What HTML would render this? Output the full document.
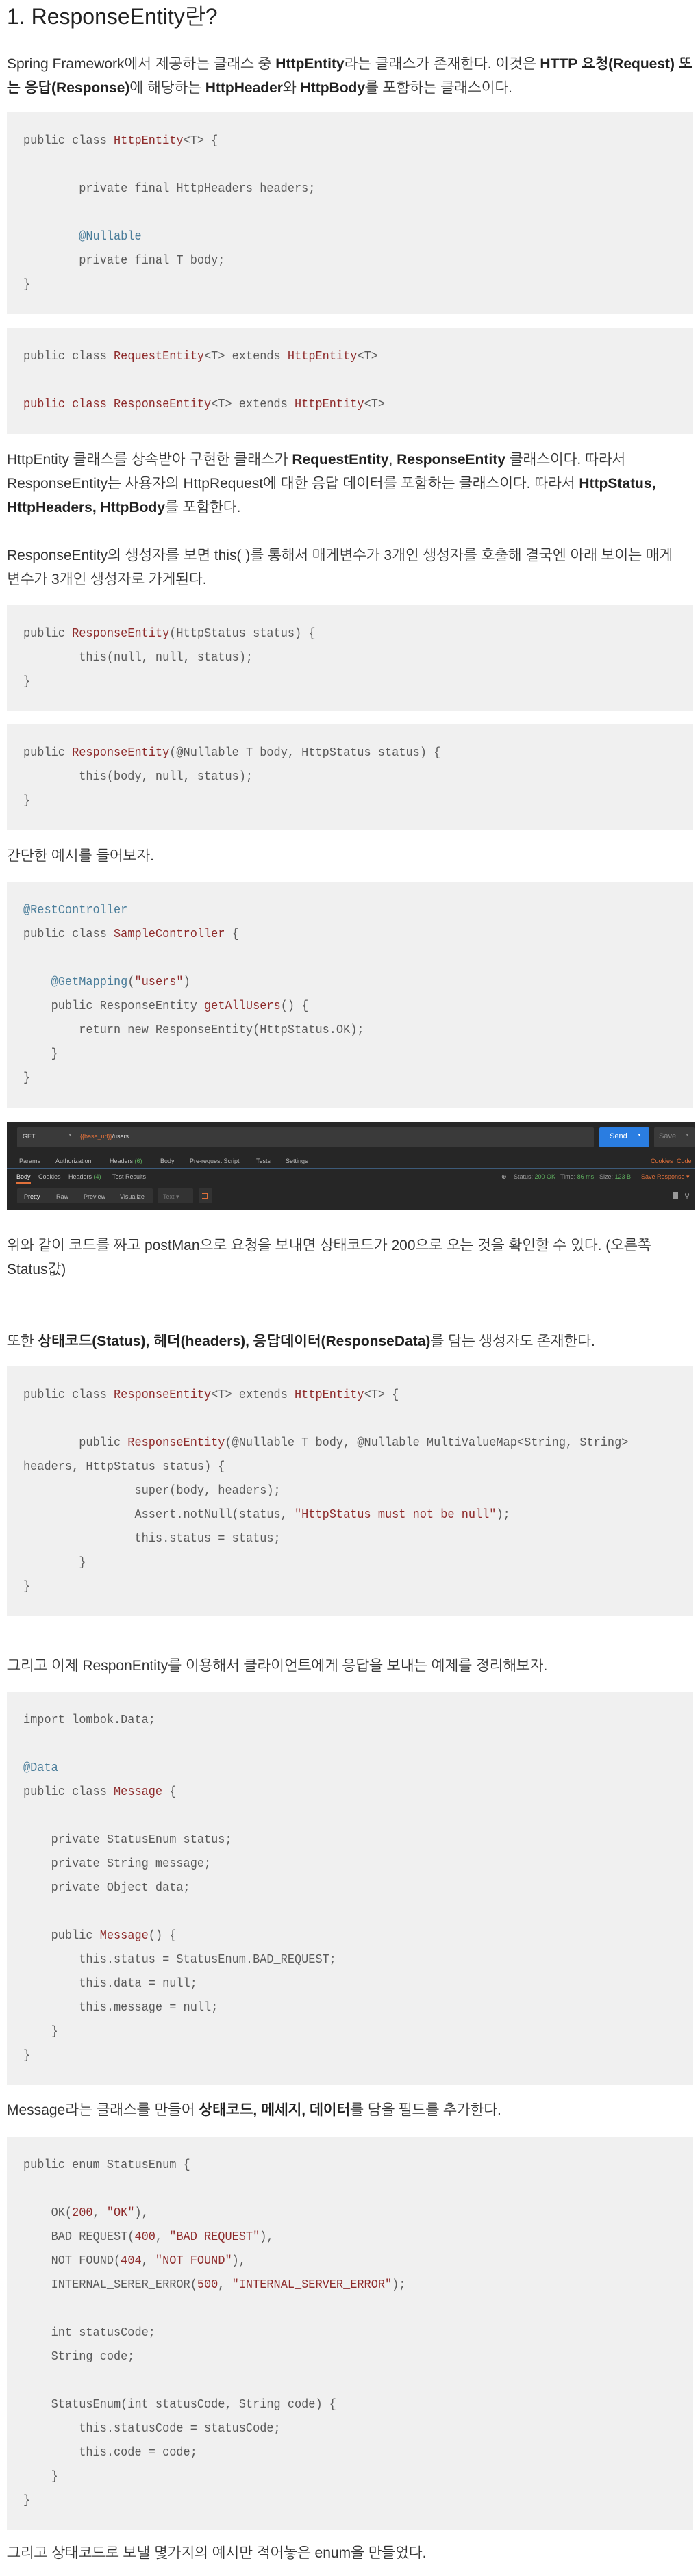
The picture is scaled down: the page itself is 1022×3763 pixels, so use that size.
<!DOCTYPE html>
<html><head><meta charset="utf-8">
<style>
*{margin:0;padding:0;box-sizing:border-box}
html,body{width:1022px;height:3763px;background:#fff;overflow:hidden}
body{position:relative;font-family:"Liberation Sans","NanumGothic","Noto Sans CJK KR",sans-serif;color:#333}
.t{position:absolute;left:10px;font-size:32px;font-weight:300;color:#222;line-height:48px;top:0;white-space:nowrap}
.p{position:absolute;left:10px;font-size:21px;line-height:35px;white-space:nowrap;color:#333}
.p b{font-weight:bold;color:#222}
.c{position:absolute;left:10px;width:1002px;background:#f0f0f0;padding:25px 24px 25px 24px;font-family:"Liberation Mono","NanumGothic",monospace;font-size:18px;line-height:35px;color:#5a5a5a;white-space:pre}
.c .in{transform:scaleX(0.94);transform-origin:0 0;width:1000px}
.k{color:#8e2b2b}
.a{color:#4a7d9a}
#pm{position:absolute;left:10px;top:1639px;width:1004px;height:128px;background:#262626;font-family:"Liberation Sans",sans-serif;font-size:9px;color:#bbb;overflow:hidden}
#pm div{position:absolute;white-space:nowrap}
.o{color:#e0703a}
.g{color:#5fae5f}
</style></head><body>

<div class="t">1. ResponseEntity란?</div>

<div class="p" style="top:76px">Spring Framework에서 제공하는 클래스 중 <b>HttpEntity</b>라는 클래스가 존재한다. 이것은 <b>HTTP 요청(Request) 또</b><br><b>는 응답(Response)</b>에 해당하는 <b>HttpHeader</b>와 <b>HttpBody</b>를 포함하는 클래스이다.</div>

<div class="c" style="top:164px"><div class="in">public class <span class="k">HttpEntity</span>&lt;T&gt; {

        private final HttpHeaders headers;

        <span class="a">@Nullable</span>
        private final T body;
}</div></div>

<div class="c" style="top:479px"><div class="in">public class <span class="k">RequestEntity</span>&lt;T&gt; extends <span class="k">HttpEntity</span>&lt;T&gt;

<span class="k">public class ResponseEntity</span>&lt;T&gt; extends <span class="k">HttpEntity</span>&lt;T&gt;</div></div>

<div class="p" style="top:654px">HttpEntity 클래스를 상속받아 구현한 클래스가 <b>RequestEntity</b>, <b>ResponseEntity</b> 클래스이다. 따라서<br>ResponseEntity는 사용자의 HttpRequest에 대한 응답 데이터를 포함하는 클래스이다. 따라서 <b>HttpStatus,</b><br><b>HttpHeaders, HttpBody</b>를 포함한다.</div>

<div class="p" style="top:794px">ResponseEntity의 생성자를 보면 this( )를 통해서 매게변수가 3개인 생성자를 호출해 결국엔 아래 보이는 매게<br>변수가 3개인 생성자로 가게된다.</div>

<div class="c" style="top:884px"><div class="in">public <span class="k">ResponseEntity</span>(HttpStatus status) {
        this(null, null, status);
}</div></div>

<div class="c" style="top:1058px"><div class="in">public <span class="k">ResponseEntity</span>(@Nullable T body, HttpStatus status) {
        this(body, null, status);
}</div></div>

<div class="p" style="top:1233px">간단한 예시를 들어보자.</div>

<div class="c" style="top:1288px"><div class="in"><span class="a">@RestController</span>
public class <span class="k">SampleController</span> {

    <span class="a">@GetMapping</span>(<span class="k">"users"</span>)
    public ResponseEntity <span class="k">getAllUsers</span>() {
        return new ResponseEntity(HttpStatus.OK);
    }
}</div></div>

<div id="pm">
  <div style="left:15px;top:8px;width:842px;height:29px;background:#3a3a3a;border-radius:2px"></div>
  <div style="left:23px;top:16px;color:#ddd">GET</div>
  <div style="left:89px;top:16px;color:#999;font-size:7px">▼</div>
  <div style="left:107px;top:16px"><span class="o">{{base_url}}</span><span style="color:#ddd">/users</span></div>
  <div style="left:865px;top:8px;width:73px;height:29px;background:#2a7de1;border-radius:2px"></div>
  <div style="left:880px;top:15px;color:#fff;font-size:11px">Send</div>
  <div style="left:920px;top:16px;color:#fff;font-size:7px">▼</div>
  <div style="left:945px;top:8px;width:59px;height:29px;background:#3a3a3a;border-radius:2px"></div>
  <div style="left:952px;top:15px;color:#888;font-size:11px">Save</div>
  <div style="left:990px;top:16px;color:#888;font-size:7px">▼</div>
  <div style="left:18px;top:52px">Params</div>
  <div style="left:71px;top:52px">Authorization</div>
  <div style="left:150px;top:52px">Headers <span class="g">(6)</span></div>
  <div style="left:224px;top:52px">Body</div>
  <div style="left:267px;top:52px">Pre-request Script</div>
  <div style="left:364px;top:52px">Tests</div>
  <div style="left:407px;top:52px">Settings</div>
  <div style="left:940px;top:52px" class="o">Cookies</div>
  <div style="left:978px;top:52px" class="o">Code</div>
  <div style="left:0;top:67px;width:1004px;height:1px;background:#3d5a78"></div>
  <div style="left:14px;top:75px;color:#eee">Body</div>
  <div style="left:14px;top:88px;width:21px;height:2px;background:#e0703a"></div>
  <div style="left:46px;top:75px">Cookies</div>
  <div style="left:90px;top:75px">Headers <span class="g">(4)</span></div>
  <div style="left:154px;top:75px">Test Results</div>
  <div style="left:722px;top:75px">⊕</div>
  <div style="left:740px;top:75px;color:#999">Status: <span class="g">200 OK</span></div>
  <div style="left:808px;top:75px;color:#999">Time: <span class="g">86 ms</span></div>
  <div style="left:865px;top:75px;color:#999">Size: <span class="g">123 B</span></div>
  <div style="left:918px;top:72px;width:1px;height:16px;background:#444"></div>
  <div style="left:926px;top:75px" class="o">Save Response ▾</div>
  <div style="left:15px;top:97px;width:198px;height:22px;background:#333;border-radius:2px"></div>
  <div style="left:25px;top:104px;color:#eee">Pretty</div>
  <div style="left:72px;top:104px">Raw</div>
  <div style="left:112px;top:104px">Preview</div>
  <div style="left:165px;top:104px">Visualize</div>
  <div style="left:220px;top:97px;width:52px;height:22px;background:#333;border-radius:2px"></div>
  <div style="left:228px;top:104px;color:#777">Text ▾</div>
  <div style="left:280px;top:97px;width:20px;height:22px;background:#333;border-radius:2px"></div>
  <div style="left:285px;top:103px;width:9px;height:10px;border:2px solid #e0703a;border-left:none"></div>
  <div style="left:973px;top:102px;width:7px;height:10px;background:#999"></div>
  <div style="left:989px;top:101px;color:#999;font-size:11px">⚲</div>
</div>

<div class="p" style="top:1802px">위와 같이 코드를 짜고 postMan으로 요청을 보내면 상태코드가 200으로 오는 것을 확인할 수 있다. (오른쪽<br>Status값)</div>

<div class="p" style="top:1942px">또한 <b>상태코드(Status), 헤더(headers), 응답데이터(ResponseData)</b>를 담는 생성자도 존재한다.</div>

<div class="c" style="top:1996px"><div class="in">public class <span class="k">ResponseEntity</span>&lt;T&gt; extends <span class="k">HttpEntity</span>&lt;T&gt; {

        public <span class="k">ResponseEntity</span>(@Nullable T body, @Nullable MultiValueMap&lt;String, String&gt;
headers, HttpStatus status) {
                super(body, headers);
                Assert.notNull(status, <span class="k">"HttpStatus must not be null"</span>);
                this.status = status;
        }
}</div></div>

<div class="p" style="top:2416px">그리고 이제 ResponEntity를 이용해서 클라이언트에게 응답을 보내는 예제를 정리해보자.</div>

<div class="c" style="top:2471px"><div class="in">import lombok.Data;

<span class="a">@Data</span>
public class <span class="k">Message</span> {

    private StatusEnum status;
    private String message;
    private Object data;

    public <span class="k">Message</span>() {
        this.status = StatusEnum.BAD_REQUEST;
        this.data = null;
        this.message = null;
    }
}</div></div>

<div class="p" style="top:3065px">Message라는 클래스를 만들어 <b>상태코드, 메세지, 데이터</b>를 담을 필드를 추가한다.</div>

<div class="c" style="top:3121px"><div class="in">public enum StatusEnum {

    OK(<span class="k">200</span>, <span class="k">"OK"</span>),
    BAD_REQUEST(<span class="k">400</span>, <span class="k">"BAD_REQUEST"</span>),
    NOT_FOUND(<span class="k">404</span>, <span class="k">"NOT_FOUND"</span>),
    INTERNAL_SERER_ERROR(<span class="k">500</span>, <span class="k">"INTERNAL_SERVER_ERROR"</span>);

    int statusCode;
    String code;

    StatusEnum(int statusCode, String code) {
        this.statusCode = statusCode;
        this.code = code;
    }
}</div></div>

<div class="p" style="top:3712px">그리고 상태코드로 보낼 몇가지의 예시만 적어놓은 enum을 만들었다.</div>

</body></html>
